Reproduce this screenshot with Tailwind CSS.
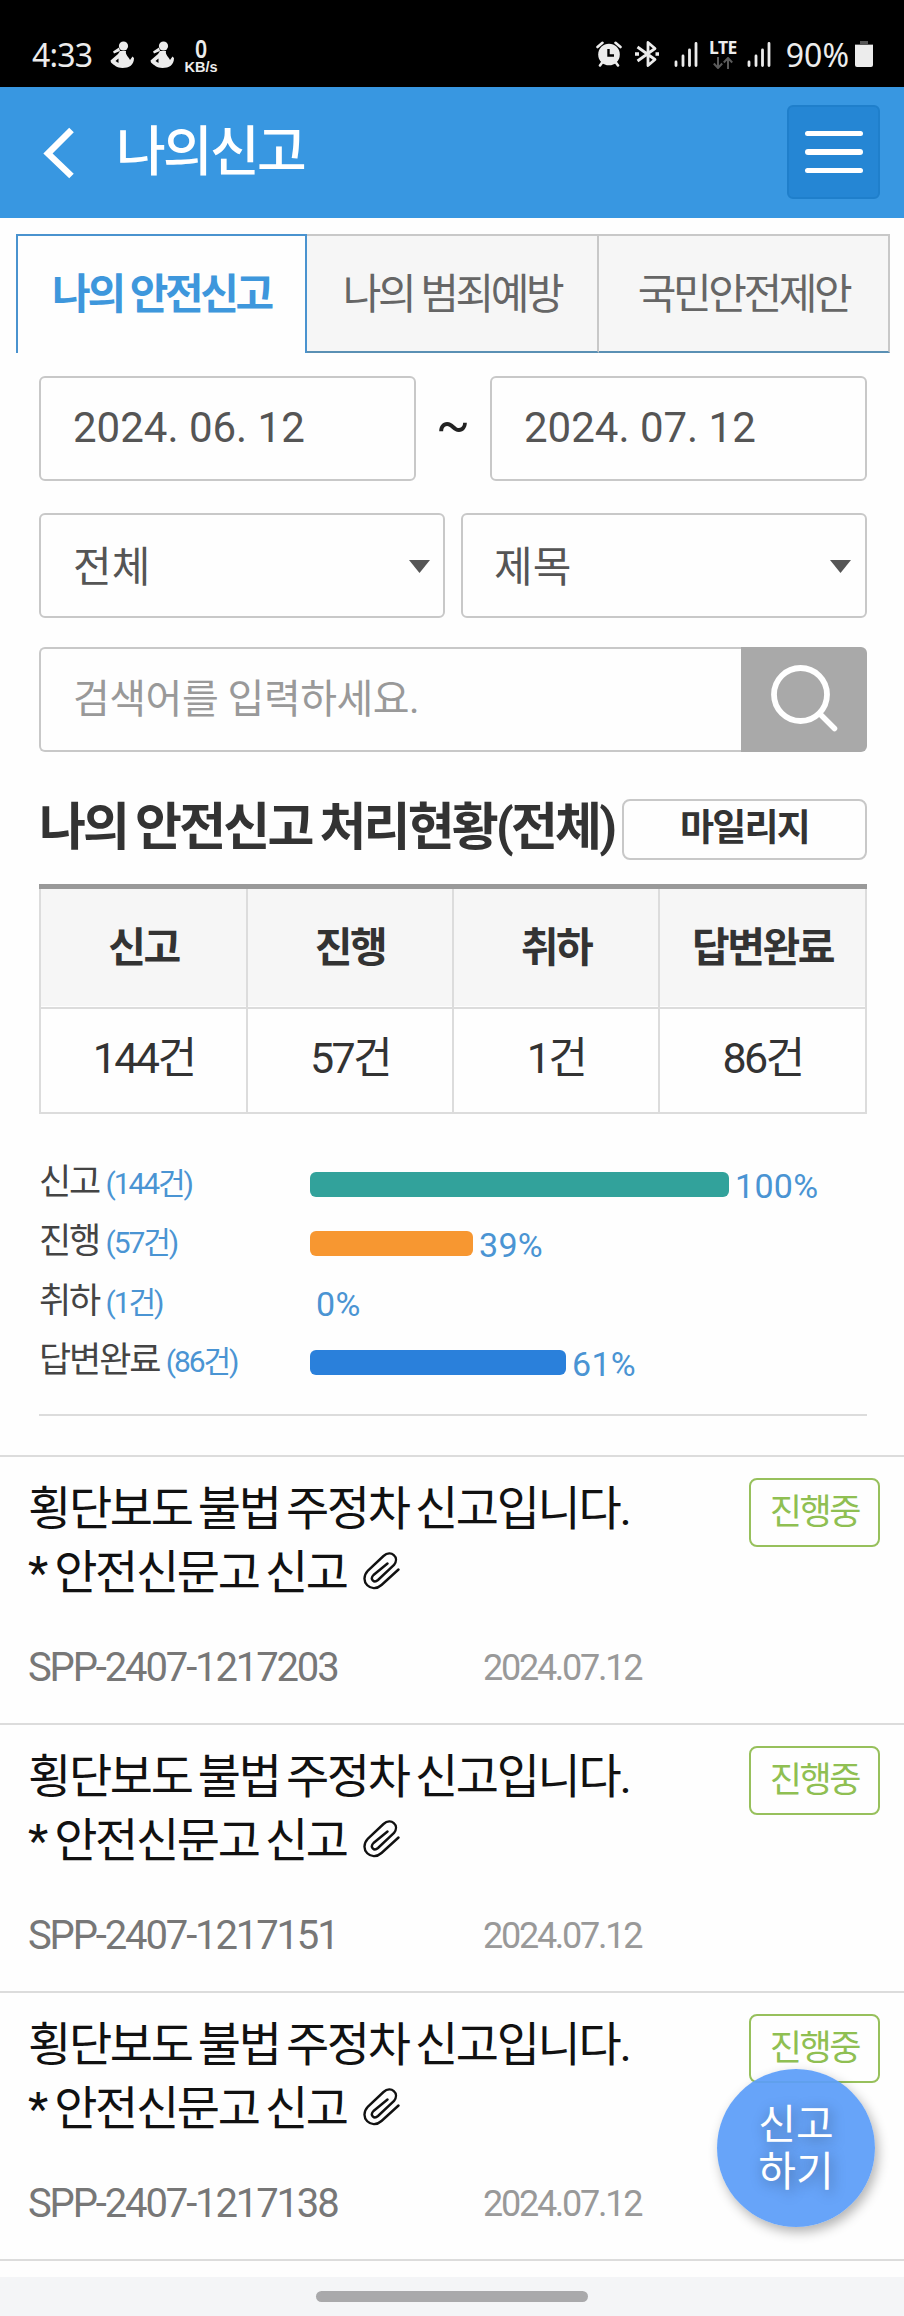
<!DOCTYPE html>
<html lang="ko">
<head>
<meta charset="utf-8">
<title>나의신고</title>
<script src="https://cdn.jsdelivr.net/npm/@tailwindcss/browser@4"></script>
</head>
<body class="bg-[#fefefe] font-[Roboto,'Noto_Sans_CJK_KR',sans-serif] text-[#333] whitespace-nowrap">
<div class="relative w-[904px] h-[2316px] overflow-hidden flex flex-col">

  <!-- status bar -->
  <div class="h-[87px] shrink-0 bg-black text-[#ececec] flex items-start pl-8 pr-[31px] pt-9 font-['Noto_Sans',sans-serif]">
    <span class="w-[78px] text-[32px] leading-[38px] tracking-[-0.8px]">4:33</span>
    <svg class="w-6 h-[27px] mt-[5px]" viewBox="0 0 24 27" fill="#ececec"><circle cx="13.500" cy="5" r="4.600"/><path d="M10 10L4 12.500L3 10.500L9 6.500ZM10 10H16C15 14 19 16 20 19L22.500 15.500L24 17C24 24 19 27 12.500 27C7 27 4 24 1 21.500L.500 19.500L8 13ZM5.500 20L8.500 22V17.500Z" fill-rule="evenodd"/></svg>
    <svg class="w-6 h-[27px] mt-[5px] ml-4" viewBox="0 0 24 27" fill="#ececec"><circle cx="13.500" cy="5" r="4.600"/><path d="M10 10L4 12.500L3 10.500L9 6.500ZM10 10H16C15 14 19 16 20 19L22.500 15.500L24 17C24 24 19 27 12.500 27C7 27 4 24 1 21.500L.500 19.500L8 13ZM5.500 20L8.500 22V17.500Z" fill-rule="evenodd"/></svg>
    <div class="ml-[10px] w-[34px] flex flex-col items-center">
      <span class="text-[25px] leading-[24px] scale-x-[0.85] font-semibold">0</span>
      <span class="text-[14.5px] leading-[12px] mt-px font-bold font-['Liberation_Sans',sans-serif]">KB/s</span>
    </div>
    <div class="grow"></div>
    <svg class="w-[26px] h-[26px] mt-[5px]" viewBox="0 0 26 26"><circle cx="13" cy="13.500" r="10.800" fill="#ececec"/><path d="M1.500 6L6.500 1.800M24.500 6L19.500 1.800M4 24.500L6.500 21M22 24.500L19.500 21" stroke="#ececec" stroke-width="2.600" stroke-linecap="round"/><path d="M12.500 8V14.500H18" stroke="#000" stroke-width="2.400" fill="none"/></svg>
    <svg class="w-6 h-[28px] ml-[13px] mt-1" viewBox="0 0 24 28" fill="none" stroke="#ececec" stroke-width="2.800" stroke-linejoin="round"><path d="M2.500 7L20 19.500L13 25.500V2.500L20 8.500L2.500 21"/><path d="M0 14h4M20.500 14h3.500" stroke-width="3.500"/></svg>
    <svg class="w-6 h-[26px] ml-[15px] mt-[5px]" viewBox="0 0 24 26" stroke="#ececec" stroke-width="2.800" stroke-linecap="round"><path d="M2 21V24.500M9 15V24.500M15.500 9V24.500M22 2.500V24.500"/></svg>
    <div class="w-[30px] ml-[10px] mt-[-2px] flex flex-col items-center"><span class="text-[17.5px] leading-[26px] font-bold tracking-[-0.5px]">LTE</span><svg class="w-5 h-3 -mt-[3px]" viewBox="0 0 20 12" fill="none" stroke="#5a5a5a" stroke-width="2"><path d="M5 0V11M.800 6.500L5 11L9.200 6.500M15 12V1M10.800 5.500L15 1L19.200 5.500"/></svg></div>
    <svg class="w-6 h-[26px] ml-[9px] mt-[5px]" viewBox="0 0 24 26" stroke="#ececec" stroke-width="2.800" stroke-linecap="round"><path d="M2 21V24.500M9 15V24.500M15.500 9V24.500M22 2.500V24.500"/></svg>
    <span class="w-[78px] text-[32px] leading-[38px] text-right">90%</span>
    <svg class="w-[18px] h-[27px] ml-[6px] mt-1" viewBox="0 0 18 27"><path d="M5 1h8v3H18V6H0V4H5Z" fill="#555"/><path d="M0 5H18V25Q18 27 16 27H2Q0 27 0 25Z" fill="#ececec"/></svg>
  </div>

  <!-- app header -->
  <header class="h-[131px] shrink-0 bg-[#3897e1] flex items-center pl-[43px] pr-6">
    <svg class="w-8 h-[52px]" viewBox="0 0 32 52" fill="none" stroke="#fff" stroke-width="6.500"><path d="M28.500 3L5 26.500L28.500 49"/></svg>
    <h1 class="ml-[41px] text-white font-medium text-[54px] leading-[60px] tracking-[-0.05em]">나의신고</h1>
    <div class="ml-auto w-[93px] h-[94px] -mt-px rounded-md border-2 border-[#1f7fcb] bg-[#2586d4] flex flex-col items-center justify-center gap-[13px]">
      <i class="w-[58px] h-[5px] rounded bg-white"></i><i class="w-[58px] h-[6px] rounded bg-white"></i><i class="w-[58px] h-[5px] rounded bg-white"></i>
    </div>
  </header>

  <!-- tabs -->
  <nav class="mt-4 ml-4 w-[874px] h-[119px] shrink-0 flex text-[42px] leading-[60px] tracking-[-0.08em] text-center text-[#666]">
    <div class="w-[291px] border-2 border-b-0 border-[#4a93cf] bg-[#fefefe] pt-[29px] font-bold text-[#3e97dc]">나의 안전신고</div>
    <div class="w-[292px] border-t-2 border-r-2 border-t-[#c8c8c8] border-r-[#c8c8c8] border-b-2 border-b-[#5a90b4] bg-[#f6f6f6] pt-[29px]">나의 범죄예방</div>
    <div class="w-[291px] border-t-2 border-r-2 border-t-[#c8c8c8] border-r-[#c8c8c8] border-b-2 border-b-[#5a90b4] bg-[#f6f6f6] pt-[29px]">국민안전제안</div>
  </nav>

  <main class="pl-[39px] pr-[37px] flex flex-col shrink-0">
    <!-- search filters -->
    <div class="mt-[23px] flex items-center justify-between text-[#555] text-[42px]">
      <div class="w-[377px] h-[105px] rounded-md border-2 border-[#c8c8c8] pl-[32px] leading-[99px]">2024. 06. 12</div>
      <span class="text-[#222] text-[50px] leading-[98px] pb-[7px]">~</span>
      <div class="w-[377px] h-[105px] rounded-md border-2 border-[#c8c8c8] pl-[32px] leading-[99px]">2024. 07. 12</div>
    </div>
    <div class="mt-8 flex justify-between text-[#555] text-[42px]">
      <div class="w-[406px] h-[105px] rounded-md border-2 border-[#c8c8c8] pl-[32px] pr-[13px] leading-[60px] flex items-center justify-between"><span class="pt-[4px]">전체</span><svg class="w-[21px] h-[13px] mt-px" viewBox="0 0 21 13"><path d="M0 0H21L10.500 13Z" fill="#555"/></svg></div>
      <div class="w-[406px] h-[105px] rounded-md border-2 border-[#c8c8c8] pl-[31px] pr-[14px] leading-[60px] flex items-center justify-between"><span class="pt-[4px]">제목</span><svg class="w-[21px] h-[13px] mt-px" viewBox="0 0 21 13"><path d="M0 0H21L10.500 13Z" fill="#555"/></svg></div>
    </div>
    <div class="mt-[29px] flex h-[105px]">
      <div class="grow rounded-l-md border-2 border-r-0 border-[#c8c8c8] pl-[32px] leading-[101px] text-[40px] tracking-[-0.5px] text-[#999]">검색어를 입력하세요.</div>
      <div class="w-[126px] rounded-r-md bg-[#a9a9a9] pl-[30px] pt-[17px]"><svg class="w-[68px] h-[70px]" viewBox="0 0 68 70" fill="none" stroke="#fff" stroke-linecap="round"><circle cx="29.500" cy="30.500" r="26.500" stroke-width="5.800"/><path d="M50 51L63.500 64.500" stroke-width="5.500"/></svg></div>
    </div>

    <!-- processing summary -->
    <div class="mt-[47px] h-[61px] flex items-center justify-between">
      <h2 class="text-[51px] leading-[58px] -mt-[3px] font-bold tracking-[-0.055em] [word-spacing:-2px]">나의 안전신고 처리현황(전체)</h2>
      <div class="w-[245px] h-[61px] rounded-lg border-2 border-[#c8c8c8] text-center text-[37px] leading-[55px] font-bold tracking-[-0.05em]">마일리지</div>
    </div>
    <div class="mt-[24px] border-t-[5px] border-[#999] text-center">
      <div class="grid grid-cols-[209px_206px_206px_207px] h-[117px] bg-[#f6f6f6] text-[41px] leading-[118px] font-bold tracking-[-0.06em]">
        <div class="border-l-2 border-r-2 border-b-2 border-[#dcdcdc]">신고</div><div class="border-r-2 border-b-2 border-[#dcdcdc]">진행</div><div class="border-r-2 border-b-2 border-[#dcdcdc]">취하</div><div class="border-r-2 border-b-2 border-[#dcdcdc]">답변완료</div>
      </div>
      <div class="grid grid-cols-[209px_206px_206px_207px] h-[108px] text-[43px] leading-[105px] tracking-[-0.06em]">
        <div class="border-l-2 border-r-2 border-b-2 border-[#dcdcdc]">144건</div><div class="border-r-2 border-b-2 border-[#dcdcdc]">57건</div><div class="border-r-2 border-b-2 border-[#dcdcdc]">1건</div><div class="border-r-2 border-b-2 border-[#dcdcdc]">86건</div>
      </div>
    </div>
    <div class="mt-[41px] h-[261px] border-b-2 border-[#dcdcdc] grid grid-cols-[271px_1fr] auto-rows-[59.3px] content-start text-[#4a94d3] text-[34px] leading-[60px]">
      <div class="text-[30px] leading-[55px] tracking-[-0.07em]"><span class="text-[#444] text-[35px] mr-px">신고</span> (144건)</div>
      <div class="flex items-center"><i class="w-[419px] h-[25px] rounded-md bg-[#32a29b] mr-[6px]"></i><span class="pt-[2px] tracking-[0.3px]">100%</span></div>
      <div class="text-[30px] leading-[55px] tracking-[-0.07em]"><span class="text-[#444] text-[35px] mr-px">진행</span> (57건)</div>
      <div class="flex items-center"><i class="w-[163px] h-[25px] rounded-md bg-[#f79731] mr-[6px]"></i><span class="pt-[2px] tracking-[0.3px]">39%</span></div>
      <div class="text-[30px] leading-[55px] tracking-[-0.07em]"><span class="text-[#444] text-[35px] mr-px">취하</span> (1건)</div>
      <div class="flex items-center pl-[6px]"><span class="pt-[2px] tracking-[0.3px]">0%</span></div>
      <div class="text-[30px] leading-[55px] tracking-[-0.07em]"><span class="text-[#444] text-[35px] mr-px">답변완료</span> (86건)</div>
      <div class="flex items-center"><i class="w-[256px] h-[25px] rounded-md bg-[#2a80db] mr-[6px]"></i><span class="pt-[2px] tracking-[0.3px]">61%</span></div>
    </div>
  </main>

  <!-- report list -->
  <section class="mt-[39px] shrink-0">
    <article class="h-[268px] border-t-2 border-[#dcdcdc] flex items-start justify-between pl-[28px] pr-6">
      <div class="pt-[20px]">
        <h3 class="text-[47px] leading-[64px] tracking-[-0.05em] [word-spacing:-3px] text-[#111]">횡단보도 불법 주정차 신고입니다.<br><span class="inline-flex items-center -mt-px"><span class="mr-[2px]">*&nbsp;</span>안전신문고 신고<svg class="ml-4 -mt-[4px] w-[37px] h-[38px]" viewBox="0 0 37 38" fill="none" stroke="#111" stroke-width="2.400" stroke-linecap="round"><path d="M24.500 11.500L10.500 23C6.500 27 11 31.500 15 28L31 13C37 5 28 -2.500 20.500 4L5 18.500C-5 29.500 8.500 42 18.500 33L35.500 17.500"/></svg></span></h3>
        <div class="mt-[37px] flex items-center leading-[52px]"><span class="w-[455px] text-[40px] tracking-[-2.13px] text-[#777]">SPP-2407-1217203</span><span class="text-[36px] tracking-[-2.27px] text-[#999]">2024.07.12</span></div>
      </div>
      <div class="mt-[21px] w-[131px] h-[69px] rounded-lg border-2 border-[#97c05c] text-center text-[#8fbf52] text-[35px] leading-[66px] tracking-[-0.07em]">진행중</div>
    </article>
    <article class="h-[268px] border-t-2 border-[#dcdcdc] flex items-start justify-between pl-[28px] pr-6">
      <div class="pt-[20px]">
        <h3 class="text-[47px] leading-[64px] tracking-[-0.05em] [word-spacing:-3px] text-[#111]">횡단보도 불법 주정차 신고입니다.<br><span class="inline-flex items-center -mt-px"><span class="mr-[2px]">*&nbsp;</span>안전신문고 신고<svg class="ml-4 -mt-[4px] w-[37px] h-[38px]" viewBox="0 0 37 38" fill="none" stroke="#111" stroke-width="2.400" stroke-linecap="round"><path d="M24.500 11.500L10.500 23C6.500 27 11 31.500 15 28L31 13C37 5 28 -2.500 20.500 4L5 18.500C-5 29.500 8.500 42 18.500 33L35.500 17.500"/></svg></span></h3>
        <div class="mt-[37px] flex items-center leading-[52px]"><span class="w-[455px] text-[40px] tracking-[-2.13px] text-[#777]">SPP-2407-1217151</span><span class="text-[36px] tracking-[-2.27px] text-[#999]">2024.07.12</span></div>
      </div>
      <div class="mt-[21px] w-[131px] h-[69px] rounded-lg border-2 border-[#97c05c] text-center text-[#8fbf52] text-[35px] leading-[66px] tracking-[-0.07em]">진행중</div>
    </article>
    <article class="h-[270px] border-y-2 border-[#dcdcdc] flex items-start justify-between pl-[28px] pr-6">
      <div class="pt-[20px]">
        <h3 class="text-[47px] leading-[64px] tracking-[-0.05em] [word-spacing:-3px] text-[#111]">횡단보도 불법 주정차 신고입니다.<br><span class="inline-flex items-center -mt-px"><span class="mr-[2px]">*&nbsp;</span>안전신문고 신고<svg class="ml-4 -mt-[4px] w-[37px] h-[38px]" viewBox="0 0 37 38" fill="none" stroke="#111" stroke-width="2.400" stroke-linecap="round"><path d="M24.500 11.500L10.500 23C6.500 27 11 31.500 15 28L31 13C37 5 28 -2.500 20.500 4L5 18.500C-5 29.500 8.500 42 18.500 33L35.500 17.500"/></svg></span></h3>
        <div class="mt-[37px] flex items-center leading-[52px]"><span class="w-[455px] text-[40px] tracking-[-2.13px] text-[#777]">SPP-2407-1217138</span><span class="text-[36px] tracking-[-2.27px] text-[#999]">2024.07.12</span></div>
      </div>
      <div class="mt-[21px] w-[131px] h-[69px] rounded-lg border-2 border-[#97c05c] text-center text-[#8fbf52] text-[35px] leading-[66px] tracking-[-0.07em]">진행중</div>
    </article>
  </section>

  <!-- floating report button -->
  <div class="absolute left-[717px] top-[2069px] w-[158px] h-[158px] rounded-full bg-[#5b9df9]/93 shadow-[3px_5px_12px_rgba(0,0,0,0.3)] text-white text-[41px] leading-[47px] text-center pt-[33px] [text-shadow:2px_3px_14px_rgba(0,0,0,0.4)]">신고<br>하기</div>

  <!-- gesture bar -->
  <div class="mt-auto h-[39px] shrink-0 bg-[#f4f5f7] flex justify-center pt-[14px]"><i class="w-[272px] h-[11px] rounded-full bg-[#a9a9ab]"></i></div>
</div>
</body>
</html>
